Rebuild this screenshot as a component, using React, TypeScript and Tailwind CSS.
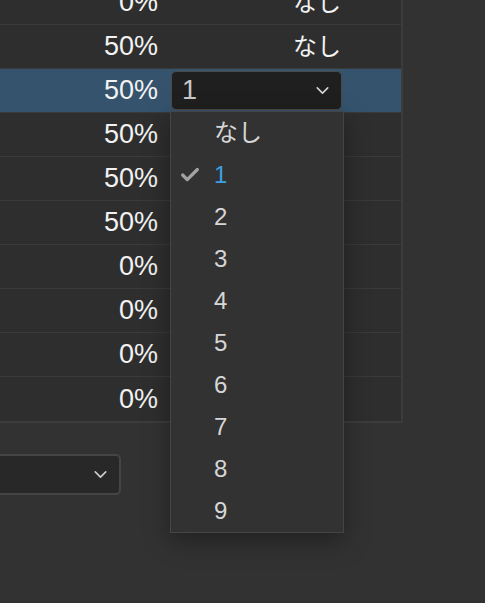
import { Check, ChevronDown } from "lucide-react";

const rows = [
	{ pct: "0%", level: "なし" },
	{ pct: "50%", level: "なし" },
	{ pct: "50%", level: "1", active: true },
	{ pct: "50%", level: "なし" },
	{ pct: "50%", level: "なし" },
	{ pct: "50%", level: "なし" },
	{ pct: "0%", level: "なし" },
	{ pct: "0%", level: "なし" },
	{ pct: "0%", level: "なし" },
	{ pct: "0%", level: "なし" },
];

const options = ["なし", "1", "2", "3", "4", "5", "6", "7", "8", "9"];

const LevelSelect = ({ value }: { value: string }) => (
	<div className="mx-[5px] h-[39px] flex items-center justify-between rounded-[5px] border border-[#4a4a4a] bg-[#1f1f1f] pl-[10px] pr-[8px]">
		<span className="text-[27px] leading-none text-[#c9c9c9]">{value}</span>
		<ChevronDown size={21} strokeWidth={1.8} className="text-[#d6d6d6]" />
	</div>
);

export default function App() {
	return (
		<div
			className="relative h-[603px] w-full overflow-hidden bg-[#323232] text-white"
			style={{ fontFamily: '"Liberation Sans", "Noto Sans CJK JP", sans-serif' }}
		>
			<div className="-mt-[19px] w-[403px] border-r-2 border-b-2 border-[#3c3c3c] bg-[#2e2e2e]">
				{rows.map((row, i) => (
					<div
						key={i}
						className={
							"grid h-[44px] grid-cols-[166px_181px_1fr] items-center border-b border-[#3a3a3a] last:border-b-0 " +
							(row.active ? "bg-[#35536d]" : "")
						}
					>
						<div className="pr-[8px] text-right text-[27px] leading-none text-[#f2f2f2]">{row.pct}</div>
						{row.active ? (
							<LevelSelect value={row.level} />
						) : (
							<div className="pr-[6px] text-right text-[24px] leading-none text-[#f2f2f2]">{row.level}</div>
						)}
						<div />
					</div>
				))}
			</div>

			<div className="mt-[31px] -ml-[20px] flex h-[41px] w-[141px] items-center justify-end rounded-[5px] border-2 border-[#454545] bg-[#282828] pr-[8px]">
				<ChevronDown size={21} strokeWidth={1.8} className="text-[#cfcfcf]" />
			</div>

			<div className="absolute left-[170px] top-[111px] w-[174px] border border-[#454545] bg-[#323232] shadow-[0_8px_24px_rgba(0,0,0,0.35)]">
				{options.map((opt) => (
					<div key={opt} className="flex h-[42px] items-center">
						<div className="flex w-[44px] justify-start pl-[8px]">
							{opt === "1" && <Check size={22} strokeWidth={3.5} className="text-[#a3a3a3]" />}
						</div>
						<span
							className={
								"-ml-[1px] text-[24px] leading-none " + (opt === "1" ? "text-[#3d9fe6]" : "text-[#d6d6d6]")
							}
						>
							{opt}
						</span>
					</div>
				))}
			</div>
		</div>
	);
}
